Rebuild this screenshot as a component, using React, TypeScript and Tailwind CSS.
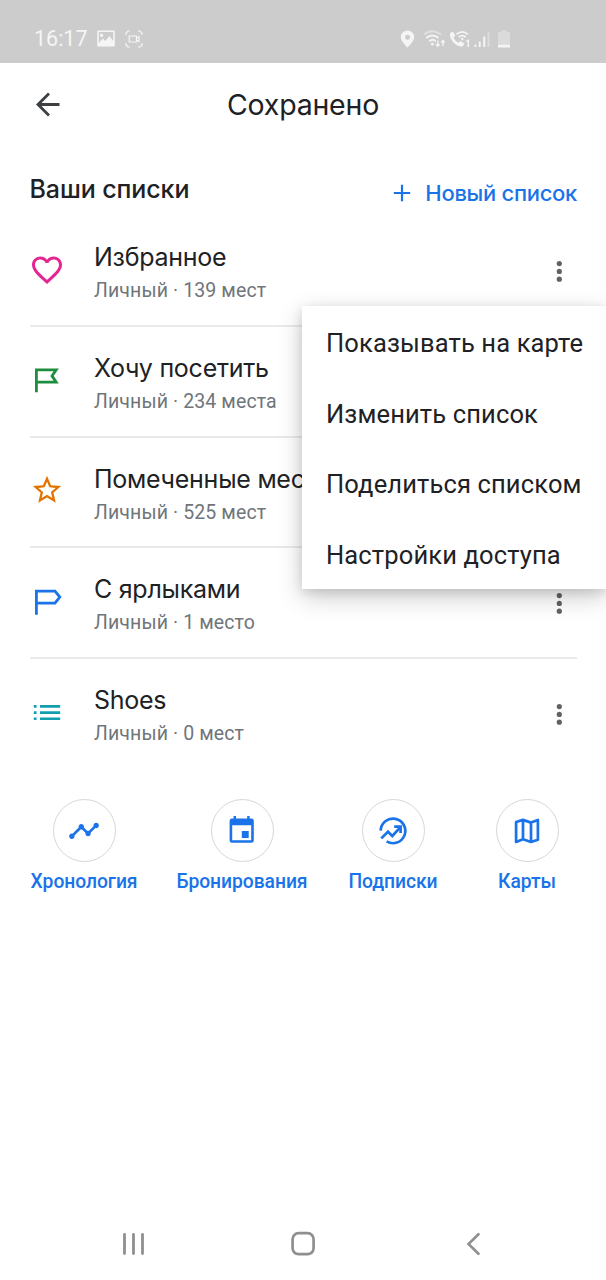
import React from 'react';

interface SavedList {
  name: string;
  details: string;
  icon: React.ReactNode;
}

const HeartIcon = () => (
  <svg width="36" height="36" viewBox="0 0 24 24" fill="#e52592">
    <path d="M16.5 3c-1.74 0-3.41.81-4.5 2.09C10.91 3.81 9.24 3 7.5 3 4.42 3 2 5.42 2 8.5c0 3.78 3.4 6.86 8.55 11.54L12 21.35l1.45-1.32C18.6 15.36 22 12.28 22 8.5 22 5.42 19.58 3 16.5 3zm-4.4 15.55l-.1.1-.1-.1C7.14 14.24 4 11.39 4 8.5 4 6.5 5.5 5 7.5 5c1.54 0 3.04.99 3.57 2.36h1.87C13.46 5.99 14.96 5 16.5 5c2 0 3.5 1.5 3.5 3.5 0 2.89-3.14 5.74-7.9 10.05z" />
  </svg>
);

const FlagIcon = () => (
  <svg width="36" height="36" viewBox="0 0 36 36" fill="none" stroke="#1e8e3e" strokeWidth="2.8">
    <path d="M7.4 29.2V6.9H27.2L23 12.9L27.2 19.2H7.4" />
  </svg>
);

const StarIcon = () => (
  <svg width="34" height="34" viewBox="0 0 24 24" fill="#e37400">
    <path d="M22 9.24l-7.19-.62L12 2 9.19 8.63 2 9.24l5.46 4.73L5.82 21 12 17.27 18.18 21l-1.63-7.03L22 9.24zM12 15.4l-3.76 2.27 1-4.28-3.32-2.88 4.38-.38L12 6.1l1.71 4.04 4.38.38-3.32 2.88 1 4.28L12 15.4z" />
  </svg>
);

const LabelIcon = () => (
  <svg width="36" height="36" viewBox="0 0 36 36" fill="none" stroke="#1a73e8" strokeWidth="2.8">
    <path d="M7.4 30.8V7.1H26L30.8 13.1L26 19.2H7.4" />
  </svg>
);

const ListIcon = () => (
  <svg width="36" height="36" viewBox="0 0 36 36" fill="#129eaf">
    <path d="M4.8 10h2.7v2.7H4.8zM4.8 16.2h2.7v2.7H4.8zM4.8 22.4h2.7v2.7H4.8zM11 10h20.2v2.7H11zM11 16.2h20.2v2.7H11zM11 22.4h20.2v2.7H11z" />
  </svg>
);

const MoreIcon = () => (
  <svg width="8" height="24" viewBox="0 0 8 24" fill="#5f6368">
    <circle cx="4.3" cy="3.6" r="2.6" />
    <circle cx="4.3" cy="11.4" r="2.6" />
    <circle cx="4.3" cy="19.2" r="2.6" />
  </svg>
);

const lists: SavedList[] = [
  { name: 'Избранное', details: 'Личный · 139 мест', icon: <HeartIcon /> },
  { name: 'Хочу посетить', details: 'Личный · 234 места', icon: <FlagIcon /> },
  { name: 'Помеченные места', details: 'Личный · 525 мест', icon: <StarIcon /> },
  { name: 'С ярлыками', details: 'Личный · 1 место', icon: <LabelIcon /> },
  { name: 'Shoes', details: 'Личный · 0 мест', icon: <ListIcon /> },
];

const menuItems = ['Показывать на карте', 'Изменить список', 'Поделиться списком', 'Настройки доступа'];

const shortcuts = [
  {
    label: 'Хронология',
    icon: (
      <svg width="36" height="36" viewBox="0 0 24 24" fill="#1a73e8">
        <path d="M23 8c0 1.1-.9 2-2 2-.18 0-.35-.02-.51-.07l-3.56 3.55c.05.16.07.34.07.52 0 1.1-.9 2-2 2s-2-.9-2-2c0-.18.02-.36.07-.52l-2.55-2.55c-.16.05-.34.07-.52.07s-.36-.02-.52-.07l-4.55 4.56c.05.16.07.33.07.51 0 1.1-.9 2-2 2s-2-.9-2-2 .9-2 2-2c.18 0 .35.02.51.07l4.56-4.55C8.02 9.36 8 9.18 8 9c0-1.1.9-2 2-2s2 .9 2 2c0 .18-.02.36-.07.52l2.55 2.55c.16-.05.34-.07.52-.07s.36.02.52.07l3.55-3.56C19.02 8.35 19 8.18 19 8c0-1.1.9-2 2-2s2 .9 2 2z" transform="translate(1.2 1.1) scale(.9)" />
      </svg>
    ),
  },
  {
    label: 'Бронирования',
    icon: (
      <svg width="36" height="36" viewBox="0 0 36 36">
        <path fill="#1a73e8" fillRule="evenodd" d="M9.6 3h2.4v2.6h11.2V3h2.4v2.6h1.8a2.4 2.4 0 0 1 2.4 2.4v19.4a2.4 2.4 0 0 1-2.4 2.4H8a2.4 2.4 0 0 1-2.4-2.4V8a2.4 2.4 0 0 1 2.4-2.4h1.6zM8.2 12.2v15h19v-15zM17.8 18h6.9v6.9h-6.9z" />
      </svg>
    ),
  },
  {
    label: 'Подписки',
    icon: (
      <svg width="36" height="36" viewBox="0 0 36 36" fill="none" stroke="#1a73e8" strokeWidth="2.7">
        <path d="M5.7 17.6A12.3 12.3 0 1 1 11.6 28.4" />
        <path d="M6.3 25.4L13 18.7L17.3 23L25 14.6" />
        <path d="M19.2 13.6H25.6V20" />
      </svg>
    ),
  },
  {
    label: 'Карты',
    icon: (
      <svg width="36" height="36" viewBox="0 0 36 36" fill="none" stroke="#1a73e8" strokeWidth="2.7" strokeLinejoin="round">
        <path d="M7.1 9L14 6.9L22 9.6L28.9 7V26.8L22 29L14 26.3L7.1 28.9ZM14 6.9V26.3M22 9.6V29" />
      </svg>
    ),
  },
];

const StatusBar = () => (
  <div className="flex h-[63px] items-center bg-[#cccccc] pt-[14px] pr-[96px] pl-[34px] text-[#f5f5f5]">
    <span className="text-[21.5px] leading-6">16:17</span>
    <svg className="ml-[9px]" width="18" height="18" viewBox="0 0 18 18" fill="currentColor">
      <path fillRule="evenodd" d="M1.2.5h15.6q1 0 1 1v14q0 1-1 1H1.2q-1 0-1-1v-14q0-1 1-1zM1.8 2v11l4-4.5 2.6 2.5 4-5 3.8 5V2zM4.6 3.5a1.7 1.7 0 1 1 0 3.4 1.7 1.7 0 0 1 0-3.4z" />
    </svg>
    <svg className="ml-[10px]" width="18" height="18" viewBox="0 0 18 18" fill="none" stroke="currentColor" strokeWidth="1.2">
      <path d="M1 5V3L3 1H5M13 1H15L17 3V5M17 13V15L15 17H13M5 17H3L1 15V13" />
      <path d="M4.2 6H11.5V12H4.2ZM11.5 8.2L14 6.7V11.5L11.5 10" />
    </svg>

    <div className="ml-auto flex items-center">
      <svg width="15" height="18" viewBox="0 0 15 18" fill="currentColor">
        <path fillRule="evenodd" d="M7.5.5a6.7 6.7 0 0 1 6.7 6.7c0 4-6.7 10.3-6.7 10.3S.8 11.2.8 7.2A6.7 6.7 0 0 1 7.5.5zm0 4.3a2.5 2.5 0 1 0 0 5 2.5 2.5 0 0 0 0-5z" />
      </svg>
      <svg className="ml-[8px]" width="23" height="18" viewBox="0 0 23 18" fill="none" stroke="currentColor" strokeWidth="1.9">
        <path d="M1 4.5Q9 -2 18 4.5" opacity=".5" />
        <path d="M3.3 8Q9.3 2.8 15.5 8" />
        <path d="M6.2 11.2Q9.5 8.5 12.8 11.2" />
        <circle cx="9.4" cy="14" r="1.5" fill="currentColor" stroke="none" />
        <path d="M14.8 10.5V16M13 14.2L14.8 16.2L16.6 14.2M20 16V11M18.2 12.5L20 10.5L21.8 12.5" strokeWidth="1.3" />
      </svg>
      <svg className="ml-[3px]" width="22" height="18" viewBox="0 0 22 18">
        <path fill="currentColor" d="M1 3.2L3.8 1.5 6.3 5.6 4.5 7.5C5.5 10 7.3 11.8 9.8 12.8L11.5 11 15.5 13.5 13.5 16.5C8 17.5 0 10 1 3.2z" />
        <path d="M7.5 4.3Q13 -.5 19 4.3M9.7 7Q13.2 4.2 16.8 7" fill="none" stroke="currentColor" strokeWidth="1.7" />
        <circle cx="13.3" cy="9" r="1.2" fill="currentColor" />
        <path d="M17 11.5L19.3 10.3V17" fill="none" stroke="currentColor" strokeWidth="1.4" />
      </svg>
      <svg className="ml-[3px]" width="16" height="18" viewBox="0 0 16 18" fill="currentColor">
        <path d="M.5 14.5h1.8V17H.5zM4.8 11.5h1.9V17H4.8zM9.2 6.5h2V17h-2z" />
        <path d="M13.5 1.5h2V17h-2z" opacity=".4" />
      </svg>
      <svg className="ml-[8px]" width="12" height="18" viewBox="0 0 12 18" fill="currentColor">
        <path d="M3.5 0h5v2H12v13H0V2h3.5z" opacity=".35" />
        <path d="M0 14.8h12V17.5H0z" />
      </svg>
    </div>
  </div>
);

const ListRow: React.FC<SavedList> = ({ name, details, icon }) => (
  <li className="flex h-[110.7px] border-b-2 border-[#e9eaec] pt-6 last:border-b-0">
    <div className="-ml-px mt-[11.5px] flex size-9 shrink-0 justify-center">{icon}</div>
    <div className="ml-[29px] flex-1 whitespace-nowrap">
      <div className="font-['Inter'] text-[25px] leading-[34px] tracking-[-0.26px] text-[#202124]">{name}</div>
      <div className="text-[19.5px] leading-[33px] tracking-[0.12px] text-[#70757a]">{details}</div>
    </div>
    <button className="mt-5 mr-[14px] h-6">
      <MoreIcon />
    </button>
  </li>
);

const App: React.FC = () => {
  return (
    <div className="relative flex h-[1280px] w-[606px] flex-col overflow-hidden bg-white font-['Roboto',sans-serif] text-[#202124]">
      <StatusBar />

      <header className="flex h-[84px] items-center px-[30px]">
        <button>
          <svg width="36" height="36" viewBox="0 0 36 36" fill="none" stroke="#3c4043" strokeWidth="2.8">
            <path d="M29.5 17.5H8M19 6.5L8 17.5L19 28.5" />
          </svg>
        </button>
        <h1 className="mr-9 flex-1 text-center font-['Inter'] text-[28.5px] leading-9 tracking-[-0.2px]">Сохранено</h1>
      </header>

      <main>
        <div className="flex h-[69.4px] items-start justify-between pt-[26px] pr-[29px] pl-[29.5px] font-['Inter'] font-medium">
          <h2 className="text-[25px] leading-8 tracking-[-0.1px]">Ваши списки</h2>
          <button className="mt-1 flex items-center text-[22px] leading-8 tracking-[-0.3px] text-[#1a73e8]">
            <svg className="mr-[14px]" width="18" height="18" viewBox="0 0 18 18" stroke="currentColor" strokeWidth="2.2">
              <path d="M9 .8V17.2M.8 9H17.2" />
            </svg>
            Новый список
          </button>
        </div>

        <ul className="pr-[29px] pl-[30px]">
          {lists.map((list) => (
            <ListRow key={list.name} {...list} />
          ))}
        </ul>

        <nav className="mt-[29.6px] grid grid-cols-[168px_148px_154px_114px]">
          {shortcuts.map((item) => (
            <a key={item.label} className="flex flex-col items-center">
              <span className="flex size-[63px] items-center justify-center rounded-full border border-[#d5d7da]">
                {item.icon}
              </span>
              <span className="mt-2 text-[19.3px] leading-6 font-medium tracking-[-0.05px] text-[#1a73e8]">{item.label}</span>
            </a>
          ))}
        </nav>
      </main>

      {/* Overflow menu of the first list */}
      <div className="absolute top-[306px] right-0 w-[304px] bg-white shadow-[0_8px_24px_rgba(0,0,0,0.2),0_3px_10px_rgba(0,0,0,0.12)]">
        {menuItems.map((item) => (
          <div key={item} className="flex h-[70.8px] items-center pt-[3px] pl-6 text-[25.5px] tracking-[0.14px] whitespace-nowrap">
            {item}
          </div>
        ))}
      </div>

      <footer className="mt-auto flex h-[73px] items-center pl-[121px] text-[#8f8f8f]">
        <svg width="24" height="24" viewBox="0 0 24 24" stroke="currentColor" strokeWidth="2.8" strokeLinecap="round">
          <path d="M3.5 2.5V21.5M12.5 2.5V21.5M21.5 2.5V21.5" />
        </svg>
        <svg className="ml-[145px]" width="26" height="26" viewBox="0 0 26 26" fill="none" stroke="currentColor" strokeWidth="2.7">
          <rect x="2.6" y="2.2" width="21" height="21" rx="6" />
        </svg>
        <svg className="ml-[150px]" width="18" height="24" viewBox="0 0 18 24" fill="none" stroke="currentColor" strokeWidth="2.6" strokeLinecap="round">
          <path d="M12.5 2.2L2.5 12L12.5 21.8" />
        </svg>
      </footer>
    </div>
  );
};

export default App;
